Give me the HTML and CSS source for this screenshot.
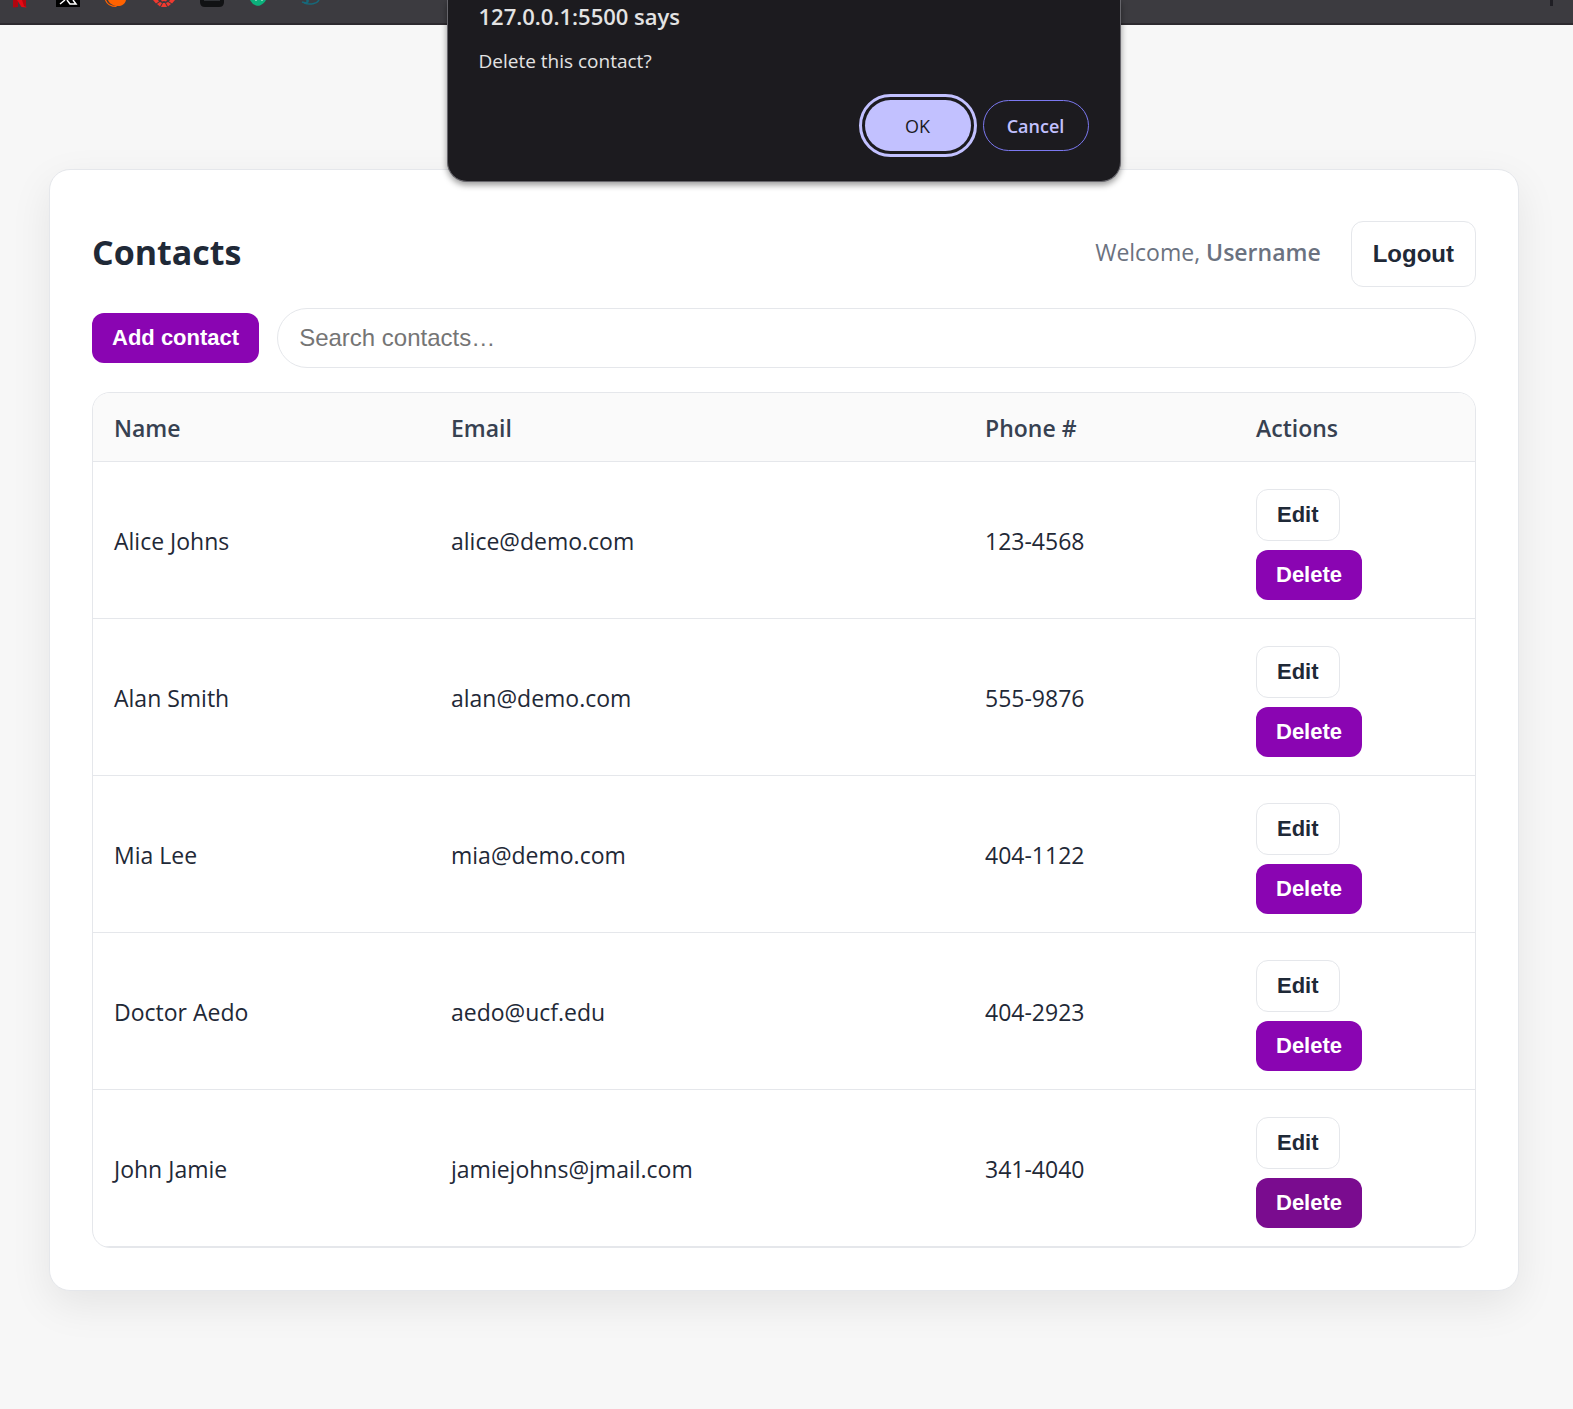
FILE: index.html
```html
<!DOCTYPE html>
<html lang="en">
<head>
<meta charset="utf-8">
<title>Contacts</title>
<link rel="stylesheet" href="styles.css">
</head>
<body>
<div class="toolbar">
  <svg class="bookmarks" width="340" height="8" viewBox="0 0 340 8" aria-hidden="true">
    <path d="M13 0h5v7l-5 .5z" fill="#b1060f"/><path d="M17 0h6l3.500 7.500-5-.5z" fill="#e50914"/><path d="M22 0h4v7l-2-1z" fill="#b1060f"/>
    <path d="M56 0h24v7H56z" fill="#000"/><path d="M65 0l-5 4M67 0l3 4h6l-3-4" fill="none" stroke="#fff" stroke-width="1.500"/>
    <path d="M105.500 0c1.500 4 5 6.500 11 6.500" fill="none" stroke="#ff6200" stroke-width="1.200"/><path d="M108 0h18c-1 4-4 6-8 6s-8.500-2-10-6z" fill="#ff6200"/>
    <path d="M153 0h5l1 1.500-3 2zM175 0h-5l-1 1.500 3 2zM161 0h6l-1 1.500-2-.5-2 .5zM157 4l3-2 2 1-2 3.500zM171 4l-3-2-2 1 2 3.500zM163 3h2l2 4h-6z" fill="#f0392f"/>
    <path d="M200 0h24v2q0 5-5 5h-14q-5 0-5-5z" fill="#111214"/><path d="M204 .5h16" stroke="#303236"/>
    <path d="M250 0h16c-1 2-3 4-6 5.500q-2 .7-4 0-4-1.500-5-4z" fill="#0bb07b"/><path d="M255 0h2M261 0h2" stroke="#d7fff1"/>
    <path d="M302 2q7 2 6-2M304 3c6 2 13 1 15-3M307 0v4" fill="none" stroke="#17687a" stroke-width="1.500"/>
  </svg>
  <span class="divider"></span>
</div>

<div class="dialog-layer">
  <div class="dialog" role="dialog" aria-labelledby="dialog-title" aria-describedby="dialog-text">
    <h2 class="dialog-title" id="dialog-title">127.0.0.1:5500 says</h2>
    <p class="dialog-text" id="dialog-text">Delete this contact?</p>
    <div class="dialog-actions">
      <button class="dialog-btn dialog-ok" type="button">OK</button>
      <button class="dialog-btn dialog-cancel" type="button">Cancel</button>
    </div>
  </div>
</div>

<main class="card">
  <header class="header">
    <h1 class="title">Contacts</h1>
    <p class="welcome">Welcome, <strong>Username</strong></p>
    <button class="btn btn-outline btn-logout" type="button">Logout</button>
  </header>
  <div class="controls">
    <button class="btn btn-primary" type="button">Add contact</button>
    <input class="search" type="search" placeholder="Search contacts…" aria-label="Search contacts">
  </div>
  <div class="table-wrap">
    <table class="contacts">
      <colgroup><col class="col-name"><col><col class="col-phone"><col class="col-actions"></colgroup>
      <thead>
        <tr><th scope="col">Name</th><th scope="col">Email</th><th scope="col">Phone #</th><th scope="col">Actions</th></tr>
      </thead>
      <tbody>
        <tr><td>Alice Johns</td><td>alice@demo.com</td><td>123-4568</td><td><div class="actions"><button class="btn btn-outline" type="button">Edit</button><button class="btn btn-primary" type="button">Delete</button></div></td></tr>
        <tr><td>Alan Smith</td><td>alan@demo.com</td><td>555-9876</td><td><div class="actions"><button class="btn btn-outline" type="button">Edit</button><button class="btn btn-primary" type="button">Delete</button></div></td></tr>
        <tr><td>Mia Lee</td><td>mia@demo.com</td><td>404-1122</td><td><div class="actions"><button class="btn btn-outline" type="button">Edit</button><button class="btn btn-primary" type="button">Delete</button></div></td></tr>
        <tr><td>Doctor Aedo</td><td>aedo@ucf.edu</td><td>404-2923</td><td><div class="actions"><button class="btn btn-outline" type="button">Edit</button><button class="btn btn-primary" type="button">Delete</button></div></td></tr>
        <tr><td>John Jamie</td><td>jamiejohns@jmail.com</td><td>341-4040</td><td><div class="actions"><button class="btn btn-outline" type="button">Edit</button><button class="btn btn-primary btn-pressed" type="button">Delete</button></div></td></tr>
      </tbody>
    </table>
  </div>
</main>
</body>
</html>
```
FILE: styles.css
```css
* { box-sizing: border-box; }

body {
  margin: 0;
  background: #f7f7f7;
  color: #1f2937;
  font-family: "Open Sans", "Noto Sans", sans-serif;
  font-size: 23px;
  line-height: 32px;
}

h1, h2, p { margin: 0; }

/* Browser toolbar strip */
.toolbar {
  display: flex;
  justify-content: space-between;
  height: 25px;
  padding-right: 20px;
  background: #3c3b40;
  border-bottom: 2px solid #2d2a2f;
}
.bookmarks { display: block; }
.divider { width: 3px; height: 6px; background: #1f1e24; }

/* Confirm dialog */
.dialog-layer {
  position: absolute;
  top: 0;
  left: 0;
  right: 0;
  display: flex;
  justify-content: center;
  padding-right: 6px;
}
.dialog {
  width: 674px;
  padding: 0 31px 30px;
  background: #1c1b1f;
  border: 1px solid #66656b;
  border-top: 0;
  border-radius: 0 0 20px 20px;
  box-shadow: 0 3px 6px rgba(0, 0, 0, 0.4);
  color: #e3e3e3;
}
.dialog-title { font-size: 22px; font-weight: 600; line-height: 32px; }
.dialog-text { padding: 13px 0 23px; font-size: 19px; line-height: 32px; }
.dialog-actions { display: flex; justify-content: flex-end; gap: 12px; }
.dialog-btn {
  width: 106px;
  height: 51px;
  padding: 0;
  border: 0;
  border-radius: 26px;
  font: 600 18px "Open Sans", "Noto Sans", sans-serif;
}
.dialog-ok {
  background: #c2c1ff;
  color: #1c1b1f;
  font-weight: 500;
  outline: 3px solid #c2c1ff;
  outline-offset: 3px;
}
.dialog-cancel { background: transparent; border: 1px solid #7b78f0; color: #c2c1ff; }

/* Contacts card */
.card {
  margin: 144px 54px 118px 49px;
  padding: 51px 42px 42px;
  background: #fff;
  border: 1px solid #e5e7eb;
  border-radius: 21px;
  box-shadow: 0 14px 42px rgba(0, 0, 0, 0.08);
}
.header { display: flex; align-items: center; }
.title { flex: 1; padding-bottom: 4px; font-size: 34px; font-weight: 700; line-height: 48px; }
.welcome { margin-right: 30px; padding-bottom: 4px; color: #6b7280; }
.welcome strong { font-weight: 600; }
.controls { display: flex; align-items: center; gap: 18px; margin: 21px 0 24px; }

.btn {
  height: 50px;
  padding: 0 20px;
  border: 0;
  border-radius: 12px;
  font: 700 22px "Liberation Sans", Arial, sans-serif;
}
.btn-primary { background: #8a05b2; color: #fff; }
.btn-pressed { background: #7a0c8f; }
.btn-outline { height: 52px; background: #fff; border: 1px solid #e5e7eb; color: #1f2937; }
.btn-logout { height: 66px; padding: 0 21px; font-size: 24px; }

.search {
  flex: 1;
  min-width: 0;
  height: 60px;
  padding: 0 21px;
  background: #fff;
  border: 1px solid #e5e7eb;
  border-radius: 30px;
  font: 24px "Liberation Sans", Arial, sans-serif;
}
.search::placeholder { color: #757575; }

.table-wrap { border: 1px solid #e5e7eb; border-radius: 18px; overflow: hidden; }
.contacts { width: 100%; table-layout: fixed; border-collapse: separate; border-spacing: 0; }
.col-name { width: 337px; }
.col-phone { width: 271px; }
.col-actions { width: 240px; }
.contacts th, .contacts td {
  padding: 19px 21px 17px;
  border-bottom: 1px solid #e5e7eb;
  text-align: left;
  vertical-align: middle;
}
.contacts th { background: #fafafa; color: #374151; font-weight: 600; }
.actions { display: flex; flex-direction: column; align-items: flex-start; gap: 9px; padding: 8px 0 1px; }
```
